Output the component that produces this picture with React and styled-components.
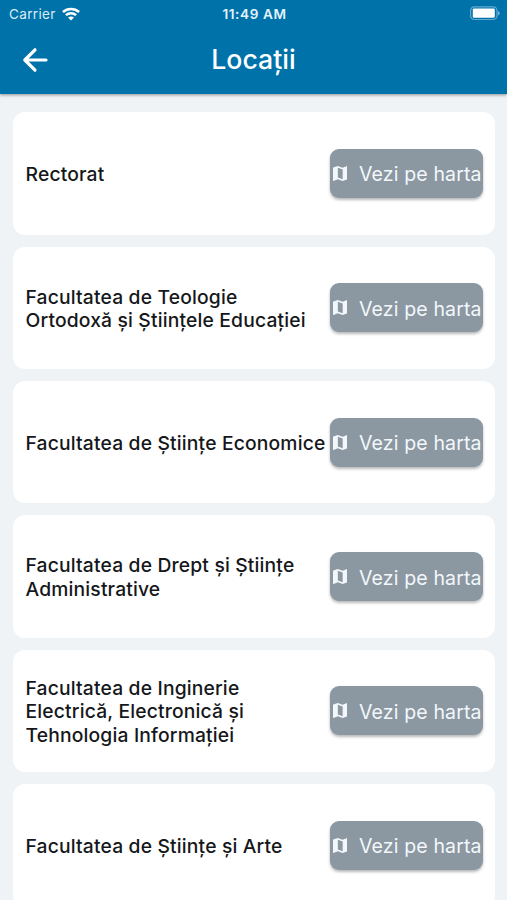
import React from "react";
import styled, { createGlobalStyle } from "styled-components";

const GlobalStyle = createGlobalStyle`
  * { box-sizing: border-box; }
  html, body { margin: 0; background: #eff3f6; }
  body { height: 900px; overflow: hidden; font-family: Inter, "Liberation Sans", sans-serif; }
`;

const Screen = styled.main`
  width: 507px;
  height: 900px;
  overflow: hidden;
  background: #eff3f6;
`;

const Header = styled.header`
  height: 94px;
  background: #0072aa;
  color: #fff;
  box-shadow: 0 1px 3px rgba(0, 0, 0, 0.4);
`;

const StatusBar = styled.div`
  height: 27px;
  display: grid;
  grid-template-columns: 1fr auto 1fr;
  align-items: center;
  padding: 0 7px 0 9px;
`;

const Carrier = styled.div`
  display: flex;
  align-items: center;
  gap: 6px;
  color: #d9edf8;
  font-size: 13.5px;
  letter-spacing: 0.35px;
`;

const Clock = styled.time`
  color: #e3f3fc;
  font-size: 13.6px;
  font-weight: 600;
  letter-spacing: 0.6px;
`;

const BatterySlot = styled.div`
  display: flex;
  justify-content: flex-end;
`;

const NavBar = styled.div`
  height: 66px;
  display: grid;
  grid-template-columns: 70px 1fr 70px;
  align-items: center;
`;

const BackButton = styled.button`
  width: 70px;
  height: 48px;
  padding: 0;
  border: 0;
  background: none;
  color: inherit;
  display: flex;
  align-items: center;
  justify-content: center;
`;

const Title = styled.h1`
  margin: 0;
  padding-bottom: 2px;
  text-align: center;
  font-size: 26.7px;
  line-height: 32px;
  font-weight: 500;
`;

const List = styled.section`
  display: flex;
  flex-direction: column;
  gap: 12px;
  padding: 18.2px 12px 0 13px;
`;

const Card = styled.article`
  flex: none;
  height: 122.4px;
  display: flex;
  align-items: center;
  padding: 0 12.5px 0 12.5px;
  background: #fff;
  border-radius: 12px;
`;

const Name = styled.h2`
  flex: 1;
  min-width: 0;
  margin: 0;
  padding-top: 2px;
  color: #15171a;
  font-size: 19.3px;
  line-height: 23.2px;
  font-weight: 500;
  letter-spacing: 0.16px;
  white-space: pre;
`;

const MapButton = styled.button`
  flex: none;
  width: 153px;
  height: 49px;
  display: flex;
  align-items: center;
  gap: 12px;
  padding: 2px 0 0 3px;
  border: 0;
  border-radius: 9px;
  background: #8b98a1;
  color: #f3f7fb;
  font: 400 19.5px/24px Inter, "Liberation Sans", sans-serif;
  letter-spacing: 0.14px;
  white-space: nowrap;
  box-shadow: 0 2px 3px rgba(0, 0, 0, 0.28);
`;

const Icon = styled.svg`
  display: block;
  flex: none;
`;

const MapGlyph = styled(Icon)`
  margin-bottom: 2px;
`;

const WifiIcon = () => (
  <Icon width="18" height="14" viewBox="0 0 18 14" fill="none" stroke="#fff" strokeWidth="2.5">
    <path d="M.9 5C5.4.9 12.6.9 17.1 5" />
    <path d="M3.9 8.2c2.9-2.7 7.3-2.7 10.2 0" />
    <path d="M6 10.5c1.7-1.5 4.3-1.5 6 0l-3 3Z" fill="#fff" stroke="none" />
  </Icon>
);

const BatteryIcon = () => (
  <Icon width="31" height="15" viewBox="0 0 31 15">
    <rect x="1.6" y="0.9" width="26.4" height="12.6" rx="3.7" fill="none" stroke="#62a9d0" strokeWidth="1.2" />
    <rect x="3.8" y="2.5" width="22" height="9.3" rx="1.2" fill="#fff" />
    <path d="M28.9 5c2.4.8 2.4 3.7 0 4.5Z" fill="#77b5d7" />
  </Icon>
);

const BackIcon = () => (
  <Icon width="26" height="26" viewBox="0 0 26 26" fill="none" stroke="#fff" strokeWidth="3.2" strokeLinecap="round" strokeLinejoin="round">
    <path d="M13 2.8 2.8 13 13 23.2M3 13h21" />
  </Icon>
);

const MapIcon = () => (
  <MapGlyph width="14.5" height="15" viewBox="3 3 18 18" preserveAspectRatio="none" fill="currentColor">
    <path d="m20.5 3-.16.03L15 5.1 9 3 3.36 4.9c-.21.07-.36.25-.36.48V20.5c0 .28.22.5.5.5l.16-.03L9 18.9l6 2.1 5.64-1.9c.21-.07.36-.25.36-.48V3.5c0-.28-.22-.5-.5-.5zM15 19l-6-2.11V5l6 2.11V19z" />
  </MapGlyph>
);

const locations = [
  "Rectorat",
  "Facultatea de Teologie\nOrtodoxă și Științele Educației",
  "Facultatea de Științe Economice",
  "Facultatea de Drept și Științe\nAdministrative",
  "Facultatea de Inginerie\nElectrică, Electronică și\nTehnologia Informației",
  "Facultatea de Științe și Arte",
];

export default function App() {
  return (
    <>
      <GlobalStyle />
      <Screen>
        <Header>
          <StatusBar>
            <Carrier>Carrier <WifiIcon /></Carrier>
            <Clock>11:49 AM</Clock>
            <BatterySlot><BatteryIcon /></BatterySlot>
          </StatusBar>
          <NavBar>
            <BackButton aria-label="Înapoi"><BackIcon /></BackButton>
            <Title>Locații</Title>
          </NavBar>
        </Header>
        <List>
          {locations.map((name) => (
            <Card key={name}>
              <Name>{name}</Name>
              <MapButton><MapIcon />Vezi pe harta</MapButton>
            </Card>
          ))}
        </List>
      </Screen>
    </>
  );
}
